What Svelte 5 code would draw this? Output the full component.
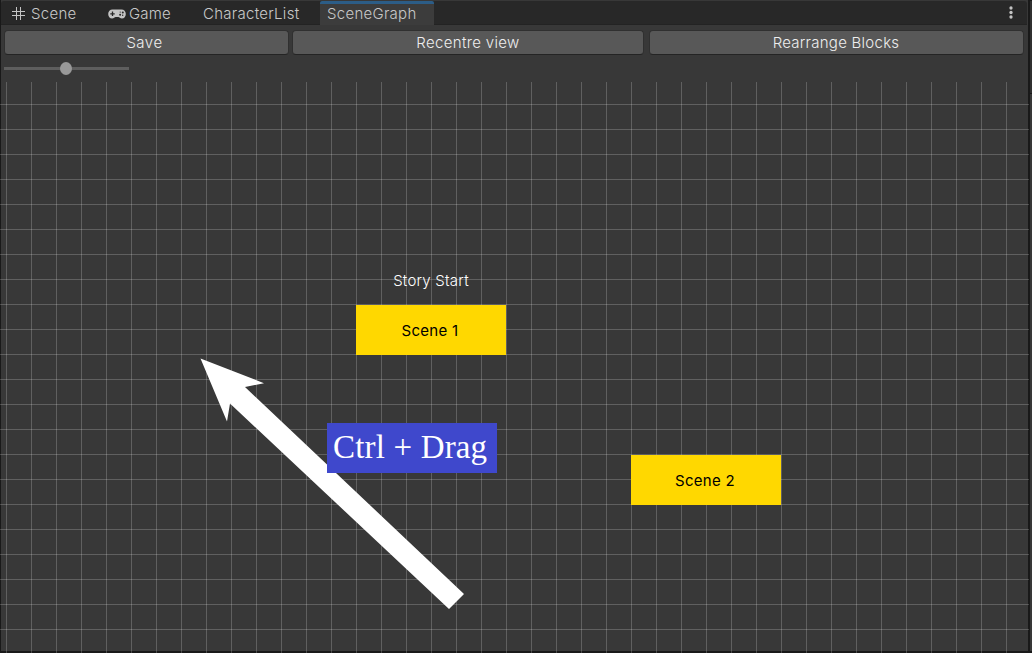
<script>
  const tabs = [
    { name: 'Scene', icon: 'grid' },
    { name: 'Game', icon: 'pad' },
    { name: 'CharacterList' },
    { name: 'SceneGraph', active: true }
  ];
  const buttons = ['Save', 'Recentre view', 'Rearrange Blocks'];
  const nodes = [
    { name: 'Scene 1', x: 356, y: 223 },
    { name: 'Scene 2', x: 631, y: 373 }
  ];
</script>

<div class="editor">
  <main class="window">
    <nav class="tabs">
      {#each tabs as tab}
        <div class="tab {tab.name.toLowerCase()}" class:active={tab.active}>
          {#if tab.icon === 'grid'}
            <svg class="grid-icon" width="13" height="13" viewBox="0 0 13 13">
              <path d="M4.5 0v13M8.5 0v13M0 4.5h13M0 8.5h13" />
            </svg>
          {:else if tab.icon === 'pad'}
            <svg class="pad-icon" width="18" height="10" viewBox="0 0 18 10">
              <path class="body" d="M4.5 0.4H13.5C16 .4 17.8 2.3 17.8 4.9S16.2 9.6 13.9 9.6C12.1 9.6 11.4 8 10.4 8H7.6C6.6 8 5.9 9.6 4.1 9.6 1.8 9.6.2 7.5.2 4.9S2 .4 4.5.4Z" />
              <path class="cross" d="M2.3 4.8h4.4M4.5 2.6v4.4" />
              <circle cx="14.8" cy="3.5" r="1" /><circle cx="12.1" cy="5.8" r="1" />
              <circle cx="14.7" cy="6.3" r=".7" /><circle cx="12.2" cy="3.1" r=".6" />
            </svg>
          {/if}
          <span>{tab.name}</span>
        </div>
      {/each}
      <svg class="menu" width="4" height="13" viewBox="0 0 4 13">
        <circle cx="2" cy="2" r="1.65" /><circle cx="2" cy="6.5" r="1.65" /><circle cx="2" cy="11" r="1.65" />
      </svg>
    </nav>
    <div class="toolbar">
      {#each buttons as label}
        <button class={label.split(' ')[0].toLowerCase()}>{label}</button>
      {/each}
    </div>
    <div class="zoom"><div class="track"><i></i></div></div>
    <section class="canvas">
      <div class="caption">Story Start</div>
      {#each nodes as node}
        <div class="node" style="left:{node.x}px;top:{node.y}px">{node.name}</div>
      {/each}
      <svg class="arrow" width="1029" height="571" viewBox="0 82 1029 571">
        <path d="M200.5 358.5L264 383.2L245 387L464 594L449 609L230 403.5L227 421.5Z" />
      </svg>
      <div class="hint">Ctrl + Drag</div>
    </section>
  </main>
  <aside><div></div><div></div></aside>
</div>

<style>
  :global(body) { background: #191919; overflow: hidden; }
  .editor { width: 1032px; height: 653px; display: flex; gap: 2px; background: #191919; font-family: Inter, sans-serif; font-size: 15px; font-weight: 360; }
  .window { width: 1028px; height: 653px; flex: none; box-sizing: border-box; padding-top: 1px; display: flex; flex-direction: column; background: linear-gradient(#191919, #191919) 0 0 / 1px 100% no-repeat, linear-gradient(#191919, #191919) 0 100% / 100% 2px no-repeat, #383838; }
  .tabs { height: 24px; flex: none; box-sizing: border-box; margin-left: 1px; margin-right: 1px; display: flex; background: #282828; border-bottom: 1px solid #232323; border-radius: 3px 3px 0 0; color: #c8c8c8; }
  .tab { display: flex; align-items: center; height: 24px; box-sizing: border-box; line-height: 24px; padding-top: 1px; letter-spacing: .28px; white-space: nowrap; }
  .scene { width: 96px; padding-left: 11px; gap: 6px; }
  .game { width: 95px; padding-left: 11px; gap: 3px; letter-spacing: .15px; }
  .characterlist { width: 128px; padding-left: 11px; }
  .tab.active { width: 114px; padding-left: 7px; padding-top: 0; background: #3c3c3c; border-top: 3px solid #2c5d87; border-radius: 2px 2px 0 0; line-height: 20px; padding-bottom: 1px; }
  .tab svg { flex: none; }
  .grid-icon path { fill: none; stroke: #c4c4c4; stroke-width: 1; }
  .pad-icon { fill: #282828; }
  .pad-icon .body { fill: #c4c4c4; }
  .pad-icon .cross { stroke: #282828; stroke-width: 1.3; }
  .menu { margin: 5px 14px 0 auto; fill: #c4c4c4; }
  .toolbar { height: 33px; flex: none; box-sizing: border-box; display: flex; padding: 5px 4px; }
  button { box-sizing: border-box; flex: none; margin: 0; padding: 0; height: 25px; border: 1px solid #303030; border-bottom-color: #242424; border-radius: 4px; background: #585858; color: #eee; font: inherit; letter-spacing: .26px; line-height: 23px; }
  .save { width: 285px; margin-right: 3px; padding-right: 4px; letter-spacing: .5px; }
  .recentre { width: 352px; margin-right: 5px; letter-spacing: .34px; }
  .rearrange { width: 375px; padding-right: 1px; }
  .zoom { height: 24px; flex: none; padding: 9px 0 0 4px; box-sizing: border-box; }
  .track { width: 125px; height: 3px; background: #5e5e5e; display: flex; align-items: center; justify-content: center; }
  .track i { width: 12px; height: 13px; flex: none; border-radius: 50%; background: #999; margin-right: 1px; }
  .canvas { position: relative; flex: none; width: 1029px; height: 571px; background: repeating-linear-gradient(90deg, #fff3 0 1px, transparent 1px 25px) 6px 0 / 1023px 100% no-repeat, repeating-linear-gradient(#fff3 0 1px, transparent 1px 25px) 0 22px / 100% 549px no-repeat; }
  .caption { position: absolute; left: 356px; top: 187px; width: 150px; text-align: center; color: #fff; line-height: 24px; letter-spacing: .22px; }
  .node { position: absolute; width: 150px; height: 50px; box-sizing: border-box; padding-right: 2px; background: #ffd800; color: #000; line-height: 51px; text-align: center; letter-spacing: .3px; font-weight: 385; }
  .arrow { position: absolute; left: 0; top: 0; fill: #fff; }
  .hint { position: absolute; left: 327px; top: 341px; width: 170px; height: 50px; box-sizing: border-box; padding-left: 6px; background: #3f48cc; color: #fff; font: 33px/49px "Liberation Serif", serif; letter-spacing: .17px; white-space: nowrap; }
  aside { width: 2px; display: flex; flex-direction: column; gap: 1px; padding-top: 1px; box-sizing: border-box; }
  aside div { background: #303030; height: 92px; }
  aside div:last-child { height: 557px; background: #383838; }
</style>
